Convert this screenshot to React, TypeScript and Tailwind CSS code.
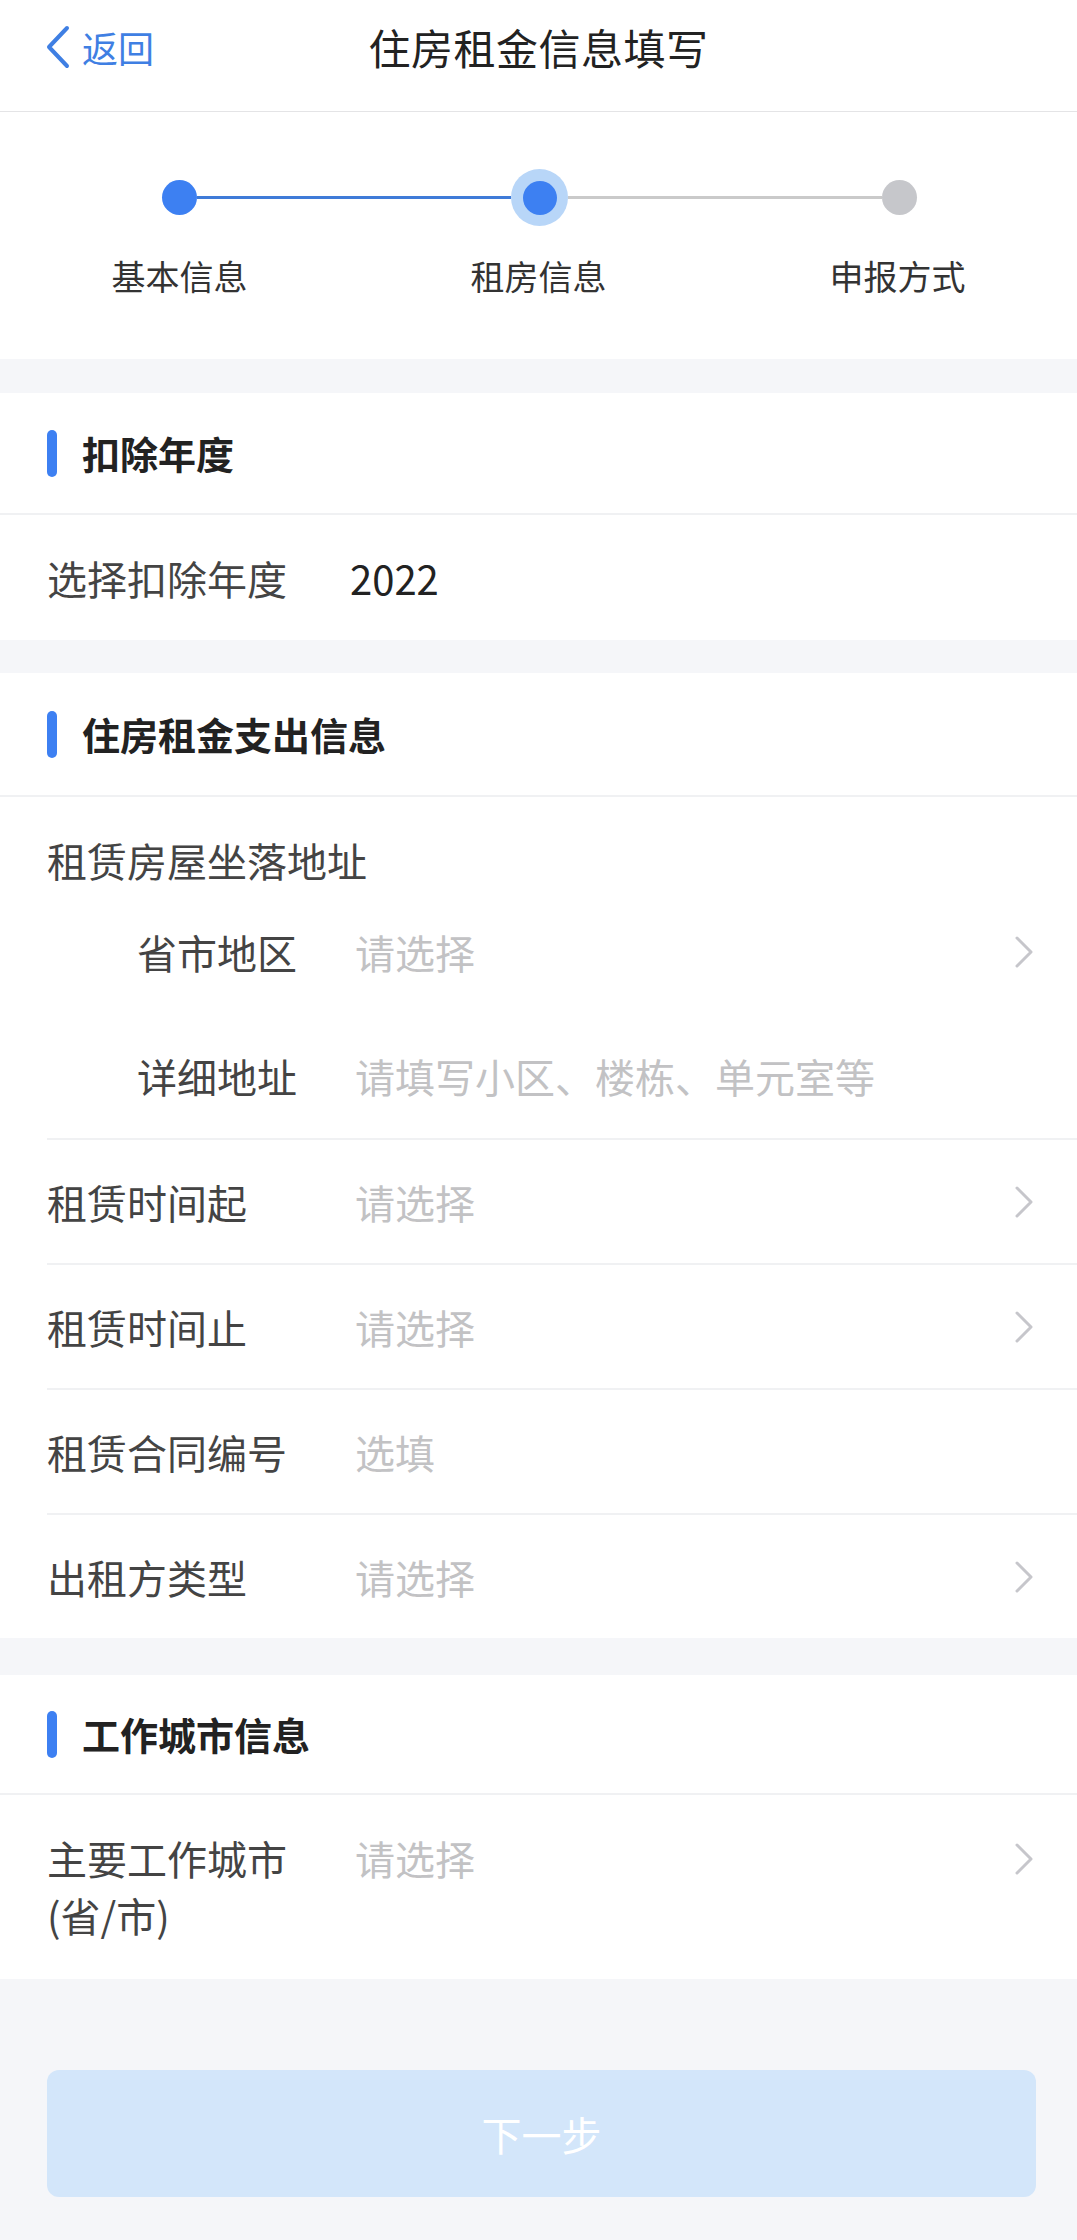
import { Fragment } from 'react';

const font = "font-['Noto_Sans_CJK_SC','Noto_Sans',sans-serif]";

function Chevron() {
  return (
    <svg width="20" height="32" viewBox="0 0 20 32" className="shrink-0">
      <polyline points="3,2 17,16 3,30" fill="none" stroke="#c6c6cb" strokeWidth="3" strokeLinecap="round" strokeLinejoin="round" />
    </svg>
  );
}

function SectionTitle({ title, height = 'h-[122px]' }: { title: string; height?: string }) {
  return (
    <div className={`${height} flex items-center border-b-2 border-[#f0f1f3]`}>
      <div className="ml-[47px] w-[10px] h-[47px] rounded-full bg-[#3d80f2]" />
      <span className="ml-[25px] text-[38px] leading-[40px] font-bold text-[#222]">{title}</span>
    </div>
  );
}

function Row({ label, placeholder, arrow, border = true }: { label: string; placeholder: string; arrow?: boolean; border?: boolean }) {
  return (
    <div className={`ml-[47px] h-[125px] flex items-center pr-[43px] ${border ? 'border-t-2 border-[#f0f1f3]' : ''}`}>
      <span className="w-[308px] shrink-0 text-[40px] leading-[40px] text-[#444]">{label}</span>
      <span className="flex-1 text-[40px] leading-[40px] text-[#c2c2c4]">{placeholder}</span>
      {arrow && <Chevron />}
    </div>
  );
}

const steps = ['基本信息', '租房信息', '申报方式'];

const rentRows = [
  { label: '租赁时间起', placeholder: '请选择', arrow: true },
  { label: '租赁时间止', placeholder: '请选择', arrow: true },
  { label: '租赁合同编号', placeholder: '选填', arrow: false },
  { label: '出租方类型', placeholder: '请选择', arrow: true },
];

export default function App() {
  return (
    <div className={`w-[1077px] min-h-[2240px] bg-[#f5f6f9] ${font}`}>
      {/* Header */}
      <div className="h-[112px] bg-white border-b border-[#e4e4e6] grid grid-cols-[1fr_auto_1fr] items-start pt-[25px]">
        <div className="flex items-center pl-[45px]">
          <svg width="26" height="44" viewBox="0 0 26 44">
            <polyline points="22,3 4,22 22,41" fill="none" stroke="#3f7fe3" strokeWidth="4" strokeLinecap="round" strokeLinejoin="round" />
          </svg>
          <span className="ml-[11px] text-[36px] leading-[36px] text-[#3f7fe3]">返回</span>
        </div>
        <span className="text-[42px] leading-[44px] text-[#222] tracking-[0.5px]">住房租金信息填写</span>
        <div />
      </div>

      {/* Stepper */}
      <div className="h-[247px] bg-white pt-[57px]">
        <div className="mx-[162px] w-[755px] h-[57px] flex items-center">
          <div className="w-[35px] h-[35px] rounded-full bg-[#3d80f2]" />
          <div className="flex-1 h-[3px] bg-[#3f7bd8]" />
          <div className="w-[57px] h-[57px] rounded-full bg-[#b8d6f8] flex items-center justify-center">
            <div className="w-[34px] h-[34px] rounded-full bg-[#3d80f2]" />
          </div>
          <div className="flex-1 h-[3px] bg-[#cacaca]" />
          <div className="w-[35px] h-[35px] rounded-full bg-[#c6c7cb]" />
        </div>
        <div className="grid grid-cols-3 mt-[33px]">
          {steps.map((s) => (
            <span key={s} className="text-center text-[34px] leading-[34px] text-[#333]">{s}</span>
          ))}
        </div>
      </div>

      {/* 扣除年度 */}
      <div className="mt-[34px] bg-white">
        <SectionTitle title="扣除年度" />
        <div className="h-[125px] flex items-center pl-[47px]">
          <span className="w-[303px] text-[40px] leading-[40px] text-[#444]">选择扣除年度</span>
          <span className="text-[40px] leading-[40px] text-[#222]">2022</span>
        </div>
      </div>

      {/* 住房租金支出信息 */}
      <div className="mt-[33px] bg-white">
        <SectionTitle title="住房租金支出信息" height="h-[124px]" />
        <div className="pt-[43px] pb-[10px] pl-[47px]">
          <span className="block text-[40px] leading-[40px] text-[#444]">租赁房屋坐落地址</span>
        </div>
        <div className="h-[124px] flex items-center pl-[137px] pr-[43px]">
          <span className="w-[218px] shrink-0 text-[40px] leading-[40px] text-[#444]">省市地区</span>
          <span className="flex-1 text-[40px] leading-[40px] text-[#c2c2c4]">请选择</span>
          <Chevron />
        </div>
        <div className="h-[124px] flex items-center pl-[137px] pr-[43px]">
          <span className="w-[218px] shrink-0 text-[40px] leading-[40px] text-[#444]">详细地址</span>
          <span className="flex-1 text-[40px] leading-[40px] text-[#c2c2c4]">请填写小区、楼栋、单元室等</span>
        </div>
        {rentRows.map((r) => (
          <Fragment key={r.label}>
            <Row label={r.label} placeholder={r.placeholder} arrow={r.arrow} />
          </Fragment>
        ))}
      </div>

      {/* 工作城市信息 */}
      <div className="mt-[37px] bg-white">
        <SectionTitle title="工作城市信息" height="h-[120px]" />
        <div className="flex items-start pl-[47px] pr-[43px] pt-[35px] pb-[35px]">
          <div className="w-[308px] shrink-0 text-[40px] leading-[57px] text-[#444]">
            <span className="block">主要工作城市</span>
            <span className="block">(省/市)</span>
          </div>
          <span className="flex-1 text-[40px] leading-[57px] text-[#c2c2c4]">请选择</span>
          <div className="h-[57px] flex items-center">
            <Chevron />
          </div>
        </div>
      </div>

      {/* Next button */}
      <div className="pt-[91px] pl-[47px] pr-[41px] pb-[42px]">
        <button className="w-full h-[127px] rounded-[12px] bg-[#d3e6fa] text-white text-[40px] leading-[40px]">
          下一步
        </button>
      </div>
    </div>
  );
}
